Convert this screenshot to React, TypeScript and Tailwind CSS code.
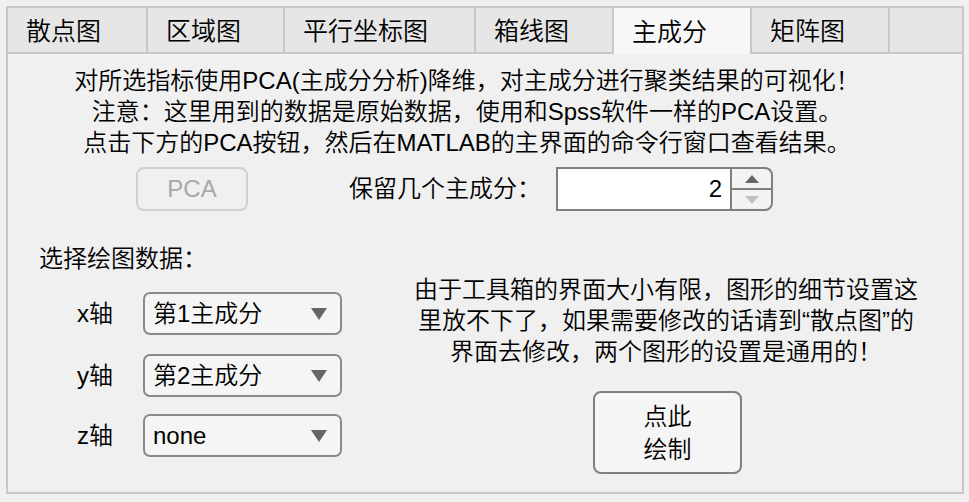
import React from 'react';

const tabs = [
  { label: '散点图', w: 'w-[140px]' },
  { label: '区域图', w: 'w-[137px]' },
  { label: '平行坐标图', w: 'w-[191px]' },
  { label: '箱线图', w: 'w-[138px]' },
  { label: '主成分', w: 'w-[138px]', active: true },
  { label: '矩阵图', w: 'w-[138px]' },
];

// latin runs keep regular weight, CJK runs use the lighter face
function L({ children }: { children: React.ReactNode }) {
  return <span className="font-normal">{children}</span>;
}

function Caret({ color }: { color: string }) {
  return (
    <svg width="16" height="12" viewBox="0 0 16 12">
      <polygon points="0,0 16,0 8,12" fill={color} />
    </svg>
  );
}

function Dropdown({ value }: { value: React.ReactNode }) {
  return (
    <div className="w-[199px] h-[43px] rounded-[7px] border-2 border-[#8a8a8a] bg-[#f5f5f5] flex items-center justify-between pl-[8px] pr-[13px]">
      <span className="text-[24px] leading-none">{value}</span>
      <Caret color="#666666" />
    </div>
  );
}

function AxisRow({ axis, value, top }: { axis: string; value: React.ReactNode; top: string }) {
  return (
    <div className={`flex items-center ${top}`}>
      <span className="w-[66px] ml-[69px] text-[24px] leading-none">
        <L>{axis}</L>轴
      </span>
      <Dropdown value={value} />
    </div>
  );
}

export default function App() {
  return (
    <div
      className="w-[969px] h-[502px] bg-[#f0f0f0] pt-[6px] pl-[6px] text-black font-[350] overflow-hidden"
      style={{ fontFamily: '"Liberation Sans", "Noto Sans CJK SC", sans-serif' }}
    >
      <div className="w-[958px]">
        {/* tab strip */}
        <div className="flex h-[48px]">
          {tabs.map((t) => (
            <div
              key={t.label}
              className={`${t.w} h-full border-t-2 border-l-2 border-[#c8c8c8] flex items-center pl-[18px] pt-[4px] text-[25px] ${
                t.active ? 'bg-[#f7f7f7] border-b-0' : 'bg-[#e6e6e6] border-b-2'
              }`}
            >
              {t.label}
            </div>
          ))}
          <div className="flex-1 h-full border-2 border-[#c8c8c8] bg-[#e6e6e6]" />
        </div>

        {/* panel */}
        <div className="h-[440px] border-2 border-t-0 border-[#c8c8c8] bg-[#f0f0f0]">
          <div className="w-[820px] ml-[49px] pt-[11px] text-center text-[24px] leading-[31px]">
            对所选指标使用<L>PCA(</L>主成分分析<L>)</L>降维，对主成分进行聚类结果的可视化！
            <br />
            注意：这里用到的数据是原始数据，使用和<L>Spss</L>软件一样的<L>PCA</L>设置。
            <br />
            点击下方的<L>PCA</L>按钮，然后在<L>MATLAB</L>的主界面的命令行窗口查看结果。
          </div>

          <div className="flex items-center mt-[9px]">
            <button className="ml-[128px] w-[112px] h-[44px] rounded-[8px] border-2 border-[#d0d0d0] bg-[#f0f0f0] text-[#a8a8a8] text-[24px] leading-none font-normal">
              PCA
            </button>
            <span className="ml-[101px] w-[207px] text-[24px] leading-none">保留几个主成分：</span>
            <div className="flex h-[44px]">
              <div className="w-[174px] h-full border-2 border-r-0 border-[#7f7f7f] bg-white flex items-center justify-end pr-[8px] text-[24px] leading-none font-normal">
                2
              </div>
              <div className="w-[43px] h-full border-2 border-[#7f7f7f] rounded-r-[8px] bg-[#f3f3f3] flex flex-col">
                <div className="flex-1 flex items-center justify-center border-b-2 border-[#7f7f7f]">
                  <svg width="14" height="8" viewBox="0 0 14 8">
                    <polygon points="0,8 14,8 7,0" fill="#666666" />
                  </svg>
                </div>
                <div className="flex-1 flex items-center justify-center">
                  <svg width="14" height="8" viewBox="0 0 14 8">
                    <polygon points="0,0 14,0 7,8" fill="#c2c2c2" />
                  </svg>
                </div>
              </div>
            </div>
          </div>

          <div className="flex items-start mt-[32px]">
            {/* left column */}
            <div className="w-[334px]">
              <div className="ml-[31px] text-[24px] leading-[31px]">选择绘图数据：</div>
              <AxisRow axis="x" value={<>第<L>1</L>主成分</>} top="mt-[18px]" />
              <AxisRow axis="y" value={<>第<L>2</L>主成分</>} top="mt-[19px]" />
              <AxisRow axis="z" value={<L>none</L>} top="mt-[17px]" />
            </div>

            {/* right column */}
            <div className="ml-[64px] mt-[31px] w-[520px]">
              <div className="text-center text-[24px] leading-[31px]">
                由于工具箱的界面大小有限，图形的细节设置这
                <br />
                里放不下了，如果需要修改的话请到“散点图”的
                <br />
                界面去修改，两个图形的设置是通用的！
              </div>
              <button className="ml-[187px] mt-[24px] w-[149px] h-[83px] rounded-[8px] border-2 border-[#808080] bg-[#f5f5f5] text-[24px] leading-[33px] flex flex-col items-center justify-center">
                <span>点此</span>
                <span>绘制</span>
              </button>
            </div>
          </div>
        </div>
      </div>
    </div>
  );
}
